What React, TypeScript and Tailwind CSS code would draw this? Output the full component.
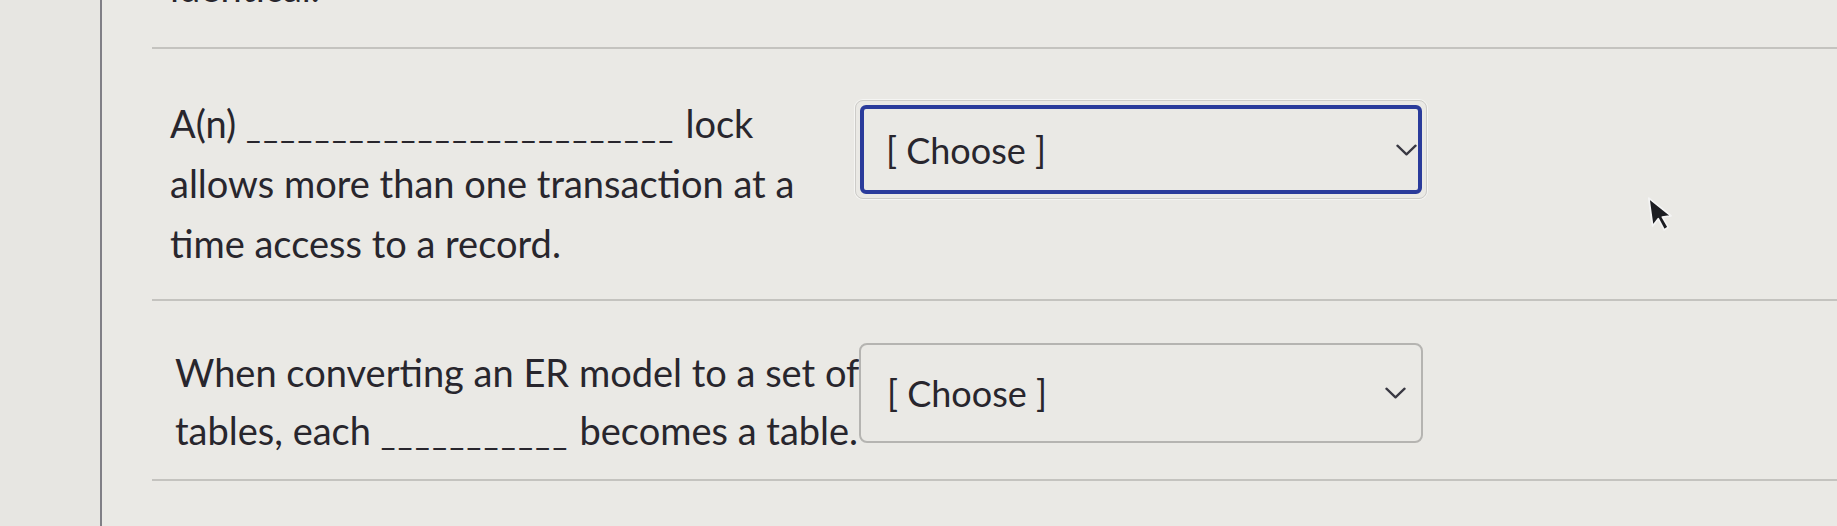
import React from 'react';

const FONT = { fontFamily: 'Lato, "Noto Sans", "Liberation Sans", sans-serif' };

function Chevron({ className }: { className?: string }) {
  return (
    <svg viewBox="0 0 22 12" className={className} fill="none">
      <path d="M1.5 1.5 L11 10.5 L20.5 1.5" stroke="#393842" strokeWidth="2.4" strokeLinecap="round" strokeLinejoin="round" />
    </svg>
  );
}

function Blank({ count }: { count: number }) {
  return (
    <span className="text-[32px] leading-none tracking-[2.5px]">{'_'.repeat(count)}</span>
  );
}

function Cursor() {
  return (
    <svg viewBox="0 0 24 38" className="absolute left-[1648px] top-[194px] w-[26px] h-[42px] rotate-[-8deg]">
      <path d="M3 2 L3 28 L9 22 L13 33 L17 31 L13 21 L21 21 Z" fill="#1c1d22" stroke="#f4f4f4" strokeWidth="1.6" strokeLinejoin="round" />
    </svg>
  );
}

export default function App() {
  return (
    <div className="relative flex h-[526px] w-full overflow-hidden bg-[#eae9e5] text-[#28262d]" style={FONT}>
      <div className="w-[102px] shrink-0 border-r-2 border-[#807f86] bg-[#e7e6e2]" />
      <div className="flex-1 pl-[50px]">
        <div className="h-[47px] overflow-hidden pl-[18px]">
          <p className="mt-[-43px] text-[38px] leading-[60px]">identical.</p>
        </div>

        <div className="flex border-t-2 border-[#c4c3bf] pl-[18px] pt-[44px] pb-[26px]">
          <div className="w-[685px] shrink-0 text-[38px] leading-[60px]">
            <p className="whitespace-nowrap">
              A(n) <Blank count={25} /> lock
            </p>
            <p className="whitespace-nowrap">allows more than one transaction at a</p>
            <p className="whitespace-nowrap">time access to a record.</p>
          </div>
          <div className="mt-[7px] h-[99px] w-[572px] rounded-[8px] border border-[#cdccc9] p-[4px] shadow-[0_0_0_1px_#f5f5f3]">
            <div className="flex h-full items-center justify-between rounded-[6px] border-4 border-[#2a3b9b] pl-[22px] pr-[1px]">
              <span className="text-[36px]">[ Choose ]</span>
              <Chevron className="w-[21px] h-[12px]" />
            </div>
          </div>
        </div>

        <div className="flex border-t-2 border-[#c4c3bf] pl-[23px] pt-[42px] pb-[20px]">
          <div className="w-[684px] shrink-0 text-[38px] leading-[58px]">
            <p className="whitespace-nowrap">When converting an ER model to a set of</p>
            <p className="whitespace-nowrap">
              tables, each <Blank count={11} /> becomes a table.
            </p>
          </div>
          <div className="flex h-[100px] w-[564px] items-center justify-between rounded-[8px] border-2 border-[#b5b4b1] pl-[26px] pr-[15px]">
            <span className="text-[36px]">[ Choose ]</span>
            <Chevron className="w-[21px] h-[12px]" />
          </div>
        </div>

        <div className="border-t-2 border-[#c4c3bf]" />
      </div>
      <Cursor />
    </div>
  );
}
